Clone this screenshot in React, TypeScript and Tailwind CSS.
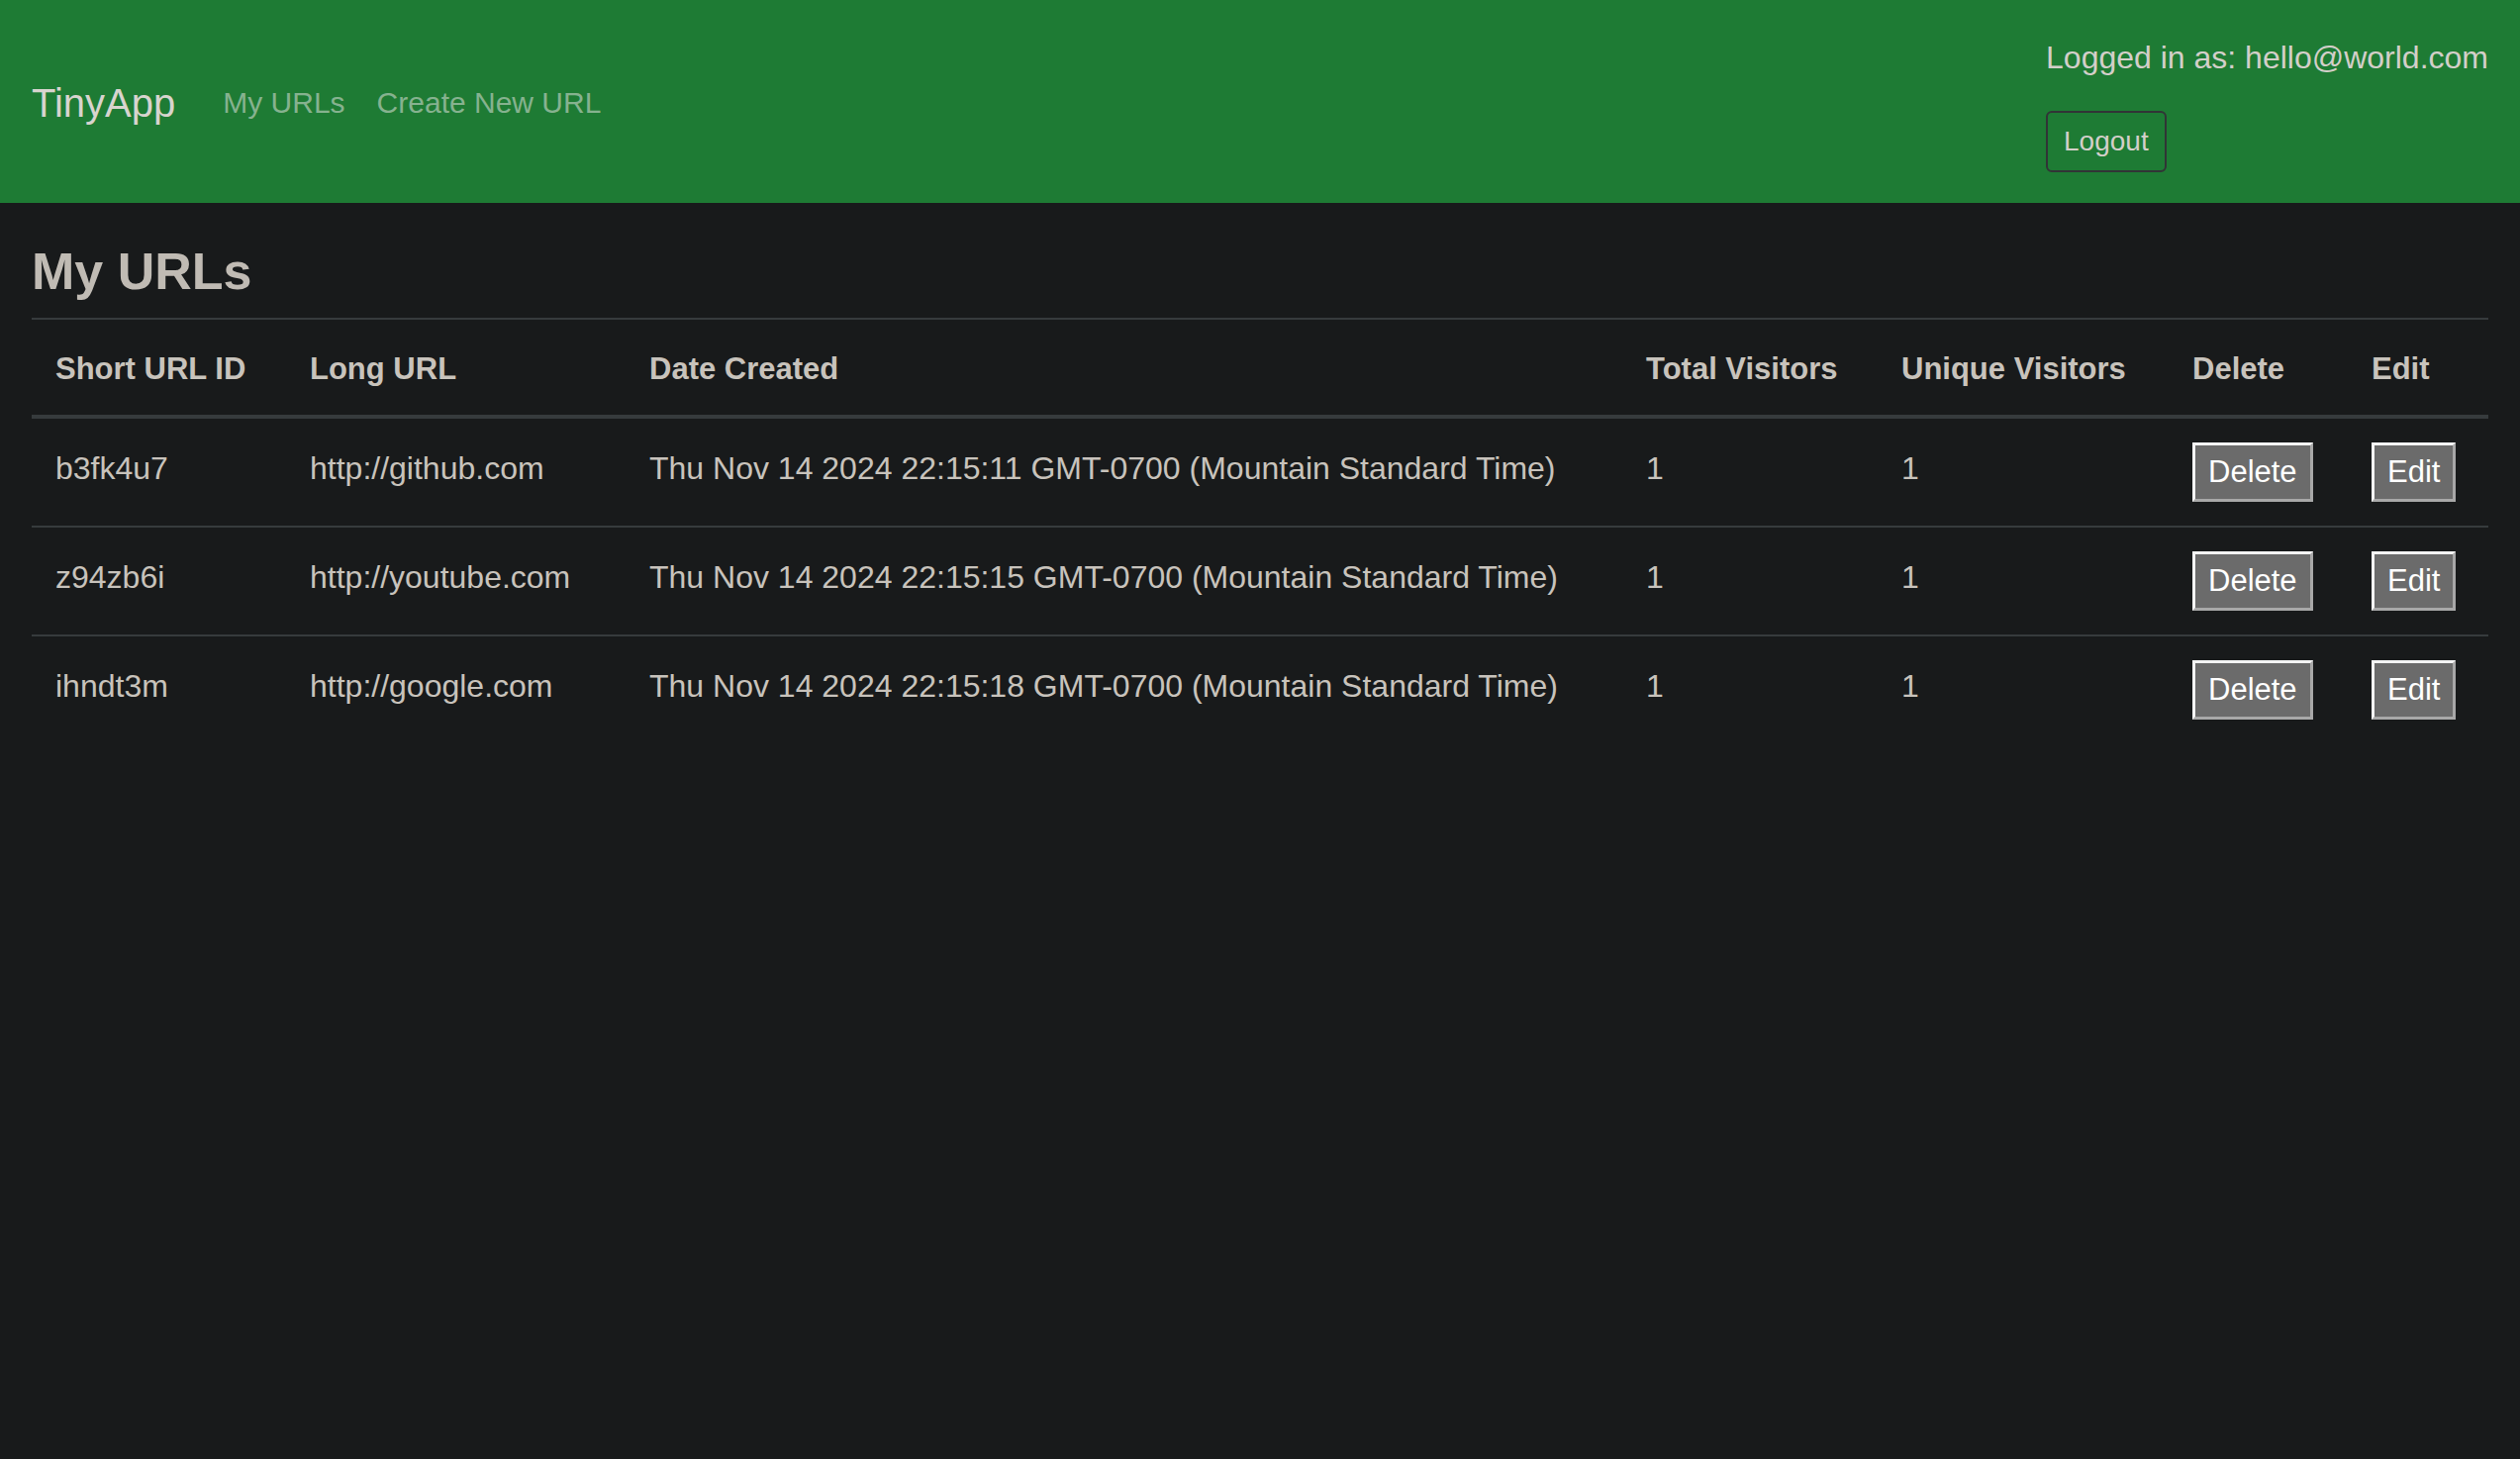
const urls = [
  {
    id: 'b3fk4u7',
    longURL: 'http://github.com',
    created: 'Thu Nov 14 2024 22:15:11 GMT-0700 (Mountain Standard Time)',
    total: 1,
    unique: 1,
  },
  {
    id: 'z94zb6i',
    longURL: 'http://youtube.com',
    created: 'Thu Nov 14 2024 22:15:15 GMT-0700 (Mountain Standard Time)',
    total: 1,
    unique: 1,
  },
  {
    id: 'ihndt3m',
    longURL: 'http://google.com',
    created: 'Thu Nov 14 2024 22:15:18 GMT-0700 (Mountain Standard Time)',
    total: 1,
    unique: 1,
  },
];

const headers = ['Short URL ID', 'Long URL', 'Date Created', 'Total Visitors', 'Unique Visitors', 'Delete', 'Edit'];

const btn =
  'block border-[3px] border-solid border-t-[#f4f4f4] border-l-[#f4f4f4] border-r-[#a8a8a8] border-b-[#a8a8a8] bg-[#6b6b6b] px-[13px] py-[3px] text-[31px] leading-[48px] text-white';

export default function App() {
  return (
    <div className="min-h-screen bg-[#181a1b] font-['Liberation_Sans',Arial,sans-serif] text-[#c8c3bc]">
      <nav className="flex h-[205px] items-center justify-between bg-[#1e7b34] px-[32px]">
        <div className="flex items-center pt-[2px]">
          <a href="#" className="mr-[32px] text-[40px] leading-[60px] text-[#d8d4ce]">
            TinyApp
          </a>
          <a href="#" className="px-[16px] text-[30px] leading-[48px] text-[#86b28f]">
            My URLs
          </a>
          <a href="#" className="px-[16px] text-[30px] leading-[48px] text-[#86b28f]">
            Create New URL
          </a>
        </div>
        <div className="flex flex-col items-start pt-[2px]">
          <span className="text-[32px] leading-[48px] text-[#d3cfc9]">Logged in as: hello@world.com</span>
          <button className="mt-[30px] rounded-[6px] border-2 border-[#313436] px-[16px] py-[8px] text-[28px] leading-[42px] text-[#d3cfc9]">
            Logout
          </button>
        </div>
      </nav>

      <main className="px-[32px] pt-[37px]">
        <h3 className="mb-[14px] text-[52px] font-bold leading-[65px] text-[#c0bbb4]">My URLs</h3>
        <table className="w-full table-fixed border-separate border-spacing-0 text-left">
          <colgroup>
            <col className="w-[257px]" />
            <col className="w-[343px]" />
            <col className="w-[1007px]" />
            <col className="w-[258px]" />
            <col className="w-[294px]" />
            <col className="w-[181px]" />
            <col className="w-[142px]" />
          </colgroup>
          <thead>
            <tr>
              {headers.map((h) => (
                <th
                  key={h}
                  className="border-t-2 border-b-4 border-[#363b3d] px-[24px] pt-[26px] pb-[22px] text-[31px] font-bold leading-[48px] whitespace-nowrap"
                >
                  {h}
                </th>
              ))}
            </tr>
          </thead>
          <tbody>
            {urls.map((u, i) => {
              const cell =
                i > 0
                  ? 'border-t-2 border-[#363b3d] px-[24px] pt-[26px] pb-[22px] align-top text-[32px] leading-[48px] whitespace-nowrap'
                  : 'px-[24px] pt-[26px] pb-[22px] align-top text-[32px] leading-[48px] whitespace-nowrap';
              const btnCell =
                i > 0
                  ? 'border-t-2 border-[#363b3d] px-[24px] py-[24px] align-top'
                  : 'px-[24px] py-[24px] align-top';
              return (
                <tr key={u.id}>
                  <td className={cell}>{u.id}</td>
                  <td className={cell}>{u.longURL}</td>
                  <td className={cell}>{u.created}</td>
                  <td className={cell}>{u.total}</td>
                  <td className={cell}>{u.unique}</td>
                  <td className={btnCell}>
                    <button className={btn}>Delete</button>
                  </td>
                  <td className={btnCell}>
                    <button className={btn}>Edit</button>
                  </td>
                </tr>
              );
            })}
          </tbody>
        </table>
      </main>
    </div>
  );
}
